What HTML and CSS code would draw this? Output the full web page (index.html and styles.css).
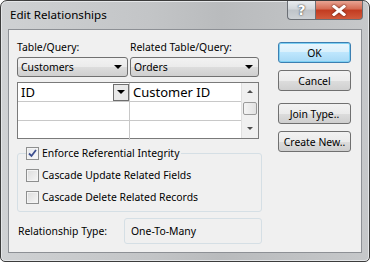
FILE: index.html
```html
<!DOCTYPE html>
<html lang="en">
<head>
  <meta charset="UTF-8">
  <title>Edit Relationships</title>
  <link rel="stylesheet" href="styles.css">
</head>
<body>

<div class="window">
  <!-- Title bar with caption buttons -->
  <div class="titlebar">
    <span class="title">Edit Relationships</span>
    <div class="caption-buttons">
      <span class="cap-btn help">?</span>
      <span class="cap-btn close">
        <svg width="14" height="11" viewBox="0 0 14 11">
          <path d="M2 1.5 L12 9.5 M12 1.5 L2 9.5" stroke="#fff" stroke-width="3" stroke-linecap="square"/>
        </svg>
      </span>
    </div>
  </div>

  <div class="client">
    <div class="left">
      <div class="labels">
        <span class="col-a">Table/Query:</span>
        <span class="col-b">Related Table/Query:</span>
      </div>

      <div class="combos">
        <div class="combo col-a"><span>Customers</span><span class="arrow"></span></div>
        <div class="combo col-b"><span>Orders</span><span class="arrow"></span></div>
      </div>

      <!-- Field mapping grid -->
      <div class="grid">
        <div class="grid-cells">
          <div class="grid-row">
            <div class="cell first">ID<span class="cell-drop"><span class="arrow"></span></span></div>
            <div class="cell second">Customer ID</div>
          </div>
          <div class="grid-row">
            <div class="cell first"></div>
            <div class="cell second"></div>
          </div>
          <div class="grid-row last">
            <div class="cell first"></div>
            <div class="cell second"></div>
          </div>
        </div>
        <div class="scrollbar">
          <span class="sb-arrow up"></span>
          <span class="sb-thumb"></span>
          <span class="sb-arrow down"></span>
        </div>
      </div>

      <fieldset class="group">
        <legend class="check-row">
          <span class="box checked">
            <svg width="9" height="9" viewBox="0 0 9 9">
              <path d="M1 4.5 L3.5 7 L8 1" fill="none" stroke="#3d4f8f" stroke-width="1.8"/>
            </svg>
          </span>
          Enforce Referential Integrity
        </legend>
        <div class="check-row"><span class="box"></span>Cascade Update Related Fields</div>
        <div class="check-row"><span class="box"></span>Cascade Delete Related Records</div>
      </fieldset>

      <div class="rel-type">
        <span class="rel-label">Relationship Type:</span>
        <span class="rel-value">One-To-Many</span>
      </div>
    </div>

    <div class="buttons">
      <div class="btn default">OK</div>
      <div class="btn">Cancel</div>
      <div class="btn gap">Join Type..</div>
      <div class="btn">Create New..</div>
    </div>
  </div>
</div>

</body>
</html>
```

FILE: styles.css
```css
body {
  margin: 0;
  padding: 0;
  background: #fff;
  font-family: "Noto Sans", "Open Sans", sans-serif;
  font-size: 10.4px;
  color: #000;
}

.window {
  width: 370px;
  height: 262px;
  box-sizing: border-box;
  display: flex;
  flex-direction: column;
  padding: 0 7px 8px 7px;
  border: 1px solid #3c3c3c;
  border-radius: 7px 7px 5px 5px;
  background: linear-gradient(90deg, #cfd1d3 0%, #c3c5c7 40%, #b9bbbd 60%, #c6c8ca 100%);
  box-shadow: inset 0 0 0 1px #e4e6e8;
}

/* Title bar */
.titlebar {
  height: 28px;
  display: flex;
  justify-content: space-between;
  align-items: flex-start;
}

.title {
  font-size: 11.6px;
  padding: 6px 0 0 2px;
  color: #000;
}

.caption-buttons {
  display: flex;
  margin-right: -1px;
}

.cap-btn {
  height: 18px;
  display: flex;
  align-items: center;
  justify-content: center;
  border: 1px solid #6b6f75;
  border-top: none;
}

.help {
  width: 27px;
  border-right: none;
  border-radius: 0 0 0 4px;
  background: linear-gradient(#e9ecef, #d2d6da 45%, #bfc4c9 50%, #cdd1d5);
  color: #fff;
  font-weight: bold;
  font-size: 14px;
  font-family: "DejaVu Sans", sans-serif;
  text-shadow: 0 0 2px #555, 0 0 1px #333;
}

.close {
  width: 46px;
  border-radius: 0 0 4px 0;
  background: linear-gradient(#e8a493, #d46a52 45%, #c23b20 50%, #d15a3c);
}

.close svg {
  filter: drop-shadow(0 0 1px #5a1a0c);
}

/* Client area */
.client {
  flex: 1;
  display: flex;
  gap: 16px;
  padding: 10px 0 0 8px;
  border: 1px solid #8d9095;
  background: #f0f0f0;
}

.left {
  width: 245px;
  display: flex;
  flex-direction: column;
}

.col-a {
  width: 111px;
}

.col-b {
  width: 129px;
}

.labels {
  display: flex;
  gap: 2px;
  height: 15px;
  line-height: 15px;
}

.combos {
  display: flex;
  gap: 2px;
  margin-top: 2px;
}

.combo {
  height: 20px;
  box-sizing: border-box;
  display: flex;
  align-items: center;
  justify-content: space-between;
  padding: 0 5px 0 3px;
  border: 1px solid #707070;
  border-radius: 3px;
  background: linear-gradient(#f2f2f2, #ebebeb 50%, #dddddd 50%, #cfcfcf);
}

.arrow {
  width: 0;
  height: 0;
  border-left: 4px solid transparent;
  border-right: 4px solid transparent;
  border-top: 4px solid #000;
}

/* Grid */
.grid {
  width: 242px;
  height: 57px;
  box-sizing: border-box;
  margin-top: 5px;
  display: flex;
  border: 1px solid #7a7a7a;
  background: #fff;
}

.grid-cells {
  flex: 1;
  min-width: 0;
}

.grid-row {
  display: flex;
  height: 19px;
  box-sizing: border-box;
  border-bottom: 1px solid #c8c8c8;
}

.grid-row.last {
  border-bottom: none;
}

.cell {
  box-sizing: border-box;
  display: flex;
  align-items: center;
  justify-content: space-between;
  font-size: 13px;
  padding-left: 3px;
}

.cell.first {
  width: 112px;
  border-right: 1px solid #c8c8c8;
}

.cell.second {
  flex: 1;
}

.cell-drop {
  width: 16px;
  height: 17px;
  box-sizing: border-box;
  display: flex;
  align-items: center;
  justify-content: center;
  border: 1px solid #6e6e6e;
  background: #e9e9e9;
}

.scrollbar {
  width: 16px;
  flex: none;
  display: flex;
  flex-direction: column;
  align-items: center;
  background: #f0f0f0;
  border-left: 1px solid #e0e0e0;
}

.sb-arrow {
  width: 0;
  height: 0;
  border-left: 3px solid transparent;
  border-right: 3px solid transparent;
}

.sb-arrow.up {
  margin-top: 7px;
  border-bottom: 3px solid #4d4d4d;
}

.sb-arrow.down {
  margin-top: 12px;
  border-top: 3px solid #4d4d4d;
}

.sb-thumb {
  width: 14px;
  height: 13px;
  margin-top: 9px;
  box-sizing: border-box;
  border: 1px solid #9b9b9b;
  border-radius: 2px;
  background: linear-gradient(90deg, #f4f4f4, #e2e2e2);
}

/* Checkbox group */
.group {
  width: 245px;
  box-sizing: border-box;
  height: 66px;
  margin: 7px 0 0 0;
  padding: 0 0 0 8px;
  border: 1px solid #d5dfe5;
  border-radius: 3px;
}

.group legend {
  padding: 0 2px 0 0;
  margin-left: 0;
}

.check-row {
  display: flex;
  align-items: center;
  gap: 3px;
  height: 15px;
  line-height: 15px;
}

.group div.check-row {
  margin-top: 7px;
}

.box {
  width: 13px;
  height: 13px;
  box-sizing: border-box;
  display: flex;
  align-items: center;
  justify-content: center;
  border: 1px solid #8e8f8f;
  background: linear-gradient(135deg, #dcdcdc, #f6f6f6);
  box-shadow: inset 0 0 0 1px #f4f4f4;
}

.box.checked {
  background: linear-gradient(135deg, #e4e6ea, #fafafa);
}

/* Relationship type */
.rel-type {
  display: flex;
  align-items: center;
  margin-top: 6px;
}

.rel-label {
  width: 106px;
  padding-left: 1px;
}

.rel-value {
  flex: 1;
  height: 26px;
  box-sizing: border-box;
  display: flex;
  align-items: center;
  padding-left: 6px;
  border: 1px solid #d5dfe5;
  border-radius: 3px;
}

/* Buttons */
.buttons {
  width: 73px;
  display: flex;
  flex-direction: column;
  gap: 7px;
  padding-top: 2px;
}

.btn {
  height: 21px;
  box-sizing: border-box;
  display: flex;
  align-items: center;
  justify-content: center;
  border: 1px solid #707070;
  border-radius: 3px;
  background: linear-gradient(#f2f2f2, #ebebeb 50%, #dddddd 50%, #cfcfcf);
}

.btn.default {
  border-color: #3c7fb1;
  box-shadow: inset 0 0 0 1px #7ed0f3;
  background: linear-gradient(#eaf6fd, #d9f0fc 50%, #bee6fd 50%, #a7d9f5);
}

.btn.gap {
  margin-top: 5px;
}
```
